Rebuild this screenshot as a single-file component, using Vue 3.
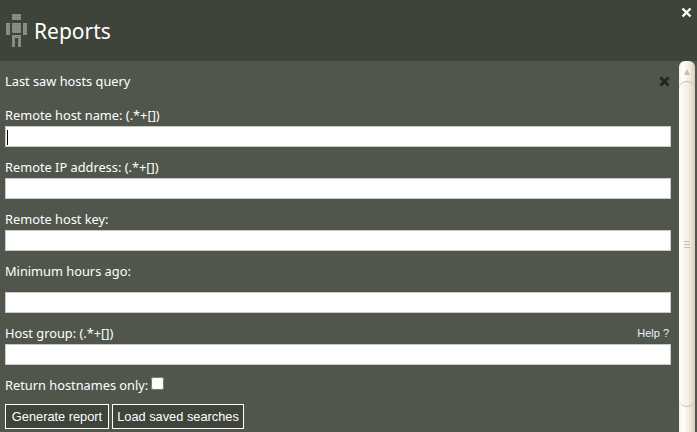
<template>
  <div class="dialog">
    <header class="head">
      <svg class="robot" width="21" height="33" viewBox="0 0 21 33">
        <defs>
          <pattern id="dots" width="2" height="2" patternUnits="userSpaceOnUse">
            <rect width="2" height="2" fill="#8d9186" />
            <rect width="1" height="1" fill="#787d72" />
          </pattern>
        </defs>
        <g fill="url(#dots)">
          <rect x="6" y="0" width="9" height="6" />
          <rect x="6" y="9" width="9" height="10" />
          <rect x="0" y="9" width="4" height="12" />
          <rect x="17" y="9" width="4" height="12" />
          <path d="M6 21 H15 V33 H12 V24 H9 V33 H6 Z" />
        </g>
      </svg>
      <h1>Reports</h1>
      <svg class="close" width="11" height="11" viewBox="0 0 11 11">
        <path d="M1.5 1.5 L9.5 9.5 M9.5 1.5 L1.5 9.5" stroke="#fff" stroke-width="2.4" />
      </svg>
    </header>
    <div class="body">
      <main class="panel">
        <div class="title-row">
          <span>Last saw hosts query</span>
          <svg width="11" height="11" viewBox="0 0 11 11">
            <path d="M1.5 1.5 L9.5 9.5 M9.5 1.5 L1.5 9.5" stroke="#23261f" stroke-width="3" />
          </svg>
        </div>
        <form class="fields" @submit.prevent>
          <div v-for="f in fields" :key="f.label" class="field" :class="f.cls">
            <label class="label">
              <span>{{ f.label }}</span>
              <a v-if="f.help" class="help">Help ?</a>
            </label>
            <div class="input-wrap">
              <input type="text" />
              <span v-if="f.caret" class="caret"></span>
            </div>
          </div>
          <div class="check">
            <span>Return hostnames only:</span>
            <input type="checkbox" />
          </div>
          <div class="buttons">
            <button type="button" class="gen">Generate report</button>
            <button type="button" class="load">Load saved searches</button>
          </div>
        </form>
      </main>
      <aside class="scrollbar">
        <div class="arrow"></div>
        <div class="thumb">
          <div class="grip"></div>
        </div>
      </aside>
    </div>
  </div>
</template>

<script setup>
const fields = [
  { label: 'Remote host name: (.*+[])', caret: true },
  { label: 'Remote IP address: (.*+[])' },
  { label: 'Remote host key:' },
  { label: 'Minimum hours ago:', cls: 'tall' },
  { label: 'Host group: (.*+[])', help: true }
]
</script>

<style>
html, body {
  margin: 0;
  overflow: hidden;
  background: #50564c;
}
</style>

<style scoped>
.dialog {
  width: 697px;
  height: 432px;
  overflow: hidden;
  font-family: "Noto Sans", "Open Sans", sans-serif;
  font-size: 12.8px;
  color: #fff;
  background: #50564c;
}
.head {
  position: relative;
  display: flex;
  align-items: center;
  height: 61px;
  padding: 0 0 0 6px;
  box-sizing: border-box;
  background: #3e443a;
}
.robot {
  margin: 0 7px 0 0;
}
h1 {
  margin: 0;
  font-size: 21px;
  font-weight: 400;
}
.close {
  position: absolute;
  top: 7px;
  right: 5px;
}
.body {
  display: flex;
  height: 371px;
}
.panel {
  width: 679px;
  padding: 0 8px 0 5px;
  box-sizing: border-box;
}
.title-row {
  display: flex;
  justify-content: space-between;
  align-items: center;
  height: 40px;
  margin-bottom: 5px;
  padding-right: 1px;
}
.field {
  margin-bottom: 11px;
}
.label {
  display: flex;
  justify-content: space-between;
  align-items: flex-start;
  height: 18px;
  line-height: 18px;
  margin-bottom: 2px;
}
.field.tall .label {
  height: 28px;
}
.help {
  font-family: "Liberation Sans", sans-serif;
  font-size: 11px;
  padding-right: 2px;
  color: #e8f0ff;
}
.input-wrap {
  position: relative;
}
input[type="text"] {
  display: block;
  width: 100%;
  height: 21px;
  padding: 0 1px;
  box-sizing: border-box;
  border: 1px solid #c8c8c4;
  background: #fff;
  outline: none;
}
.caret {
  position: absolute;
  left: 2px;
  top: 4px;
  width: 1px;
  height: 15px;
  background: #000;
}
.check {
  display: flex;
  align-items: flex-start;
  gap: 3px;
  height: 28px;
  line-height: 18px;
}
.check input {
  width: 13px;
  height: 13px;
  margin: 1px 0 0;
}
.buttons {
  display: flex;
  gap: 3px;
}
button {
  height: 25px;
  padding: 0;
  box-sizing: border-box;
  border: 1px solid #fff;
  background: #3e443a;
  color: #fff;
  font-family: "Liberation Sans", sans-serif;
  font-size: 12.8px;
}
.gen {
  width: 104px;
}
.load {
  width: 132px;
}
.scrollbar {
  width: 16px;
  box-sizing: border-box;
  background: linear-gradient(90deg, #f6f1e8, #fff 25%, #efe8dc 70%, #d8ccb8);
  border-radius: 6px 6px 0 0;
  overflow: hidden;
}
.arrow {
  width: 0;
  height: 0;
  margin: 8px auto 0;
  border: 3px solid transparent;
  border-top: 0;
  border-bottom: 6px solid #c9bfae;
}
.thumb {
  display: flex;
  align-items: center;
  justify-content: center;
  height: 326px;
  margin-top: 6px;
  box-sizing: border-box;
  border-top: 1px solid #c8bda9;
  border-bottom: 1px solid #c8bda9;
  border-radius: 8px;
  background: linear-gradient(90deg, #fff, #f3ece2 60%, #dcd2c1);
}
.grip {
  width: 6px;
  height: 5px;
  border-top: 1px solid #c9bfae;
  border-bottom: 1px solid #c9bfae;
  background: linear-gradient(#c9bfae, #c9bfae) center / 100% 1px no-repeat;
}
</style>
